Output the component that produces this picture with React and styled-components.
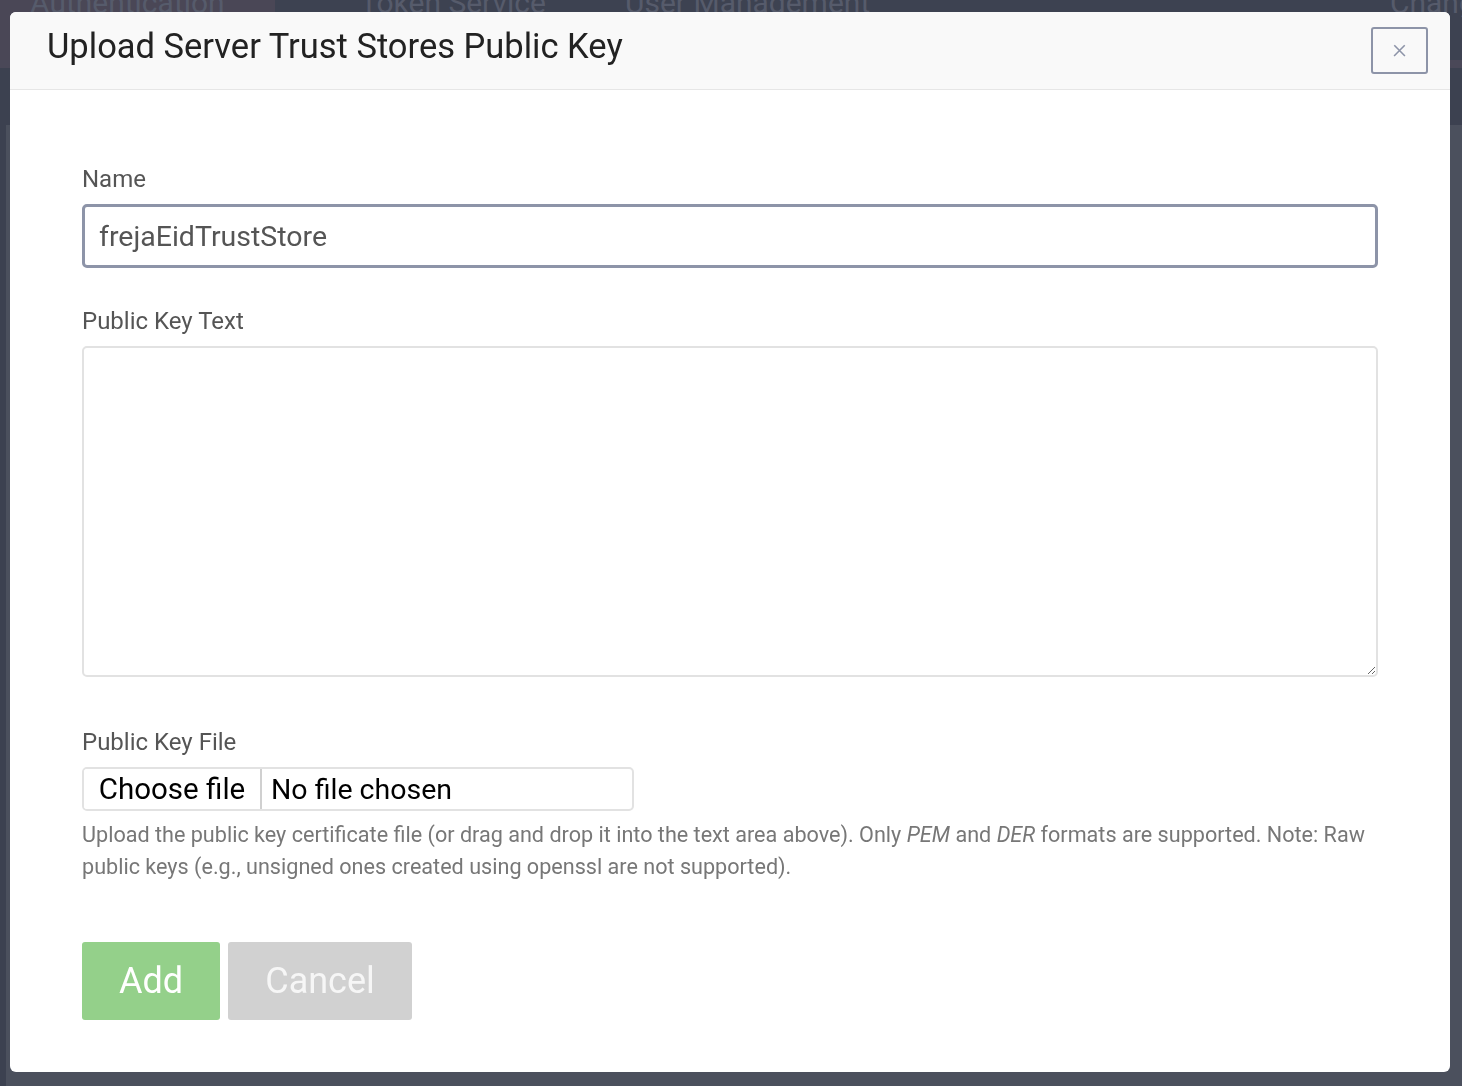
import React from "react";
import styled, { createGlobalStyle } from "styled-components";

const GlobalStyle = createGlobalStyle`
  * { box-sizing: border-box; }
  html, body { margin: 0; padding: 0; }
  body {
    font-family: Roboto, "Liberation Sans", Arial, sans-serif;
    background: #4b505d;
    overflow: hidden;
  }
`;

const Page = styled.div`
  width: 100%;
  height: 1086px;
  display: flex;
  flex-direction: column;
  background: #4b505d;
`;

const NavBar = styled.div`
  display: flex;
  height: 60px;
  background: #3d4251;
  overflow: hidden;
`;

const NavTab = styled.div`
  width: ${({ w }) => w}px;
  padding-left: ${({ pad }) => pad}px;
  background: ${({ active }) => (active ? "#4a4756" : "transparent")};
  color: #565b6b;
  font-size: 30px;
  line-height: 30px;
  margin-top: -12px;
  height: 72px;
  white-space: nowrap;
`;

const NavStrip = styled.div`
  height: 8px;
  background: #4a4858;
`;

const SubBar = styled.div`
  height: 57px;
  background: #3c4150;
`;

const Content = styled.div`
  flex: 1;
  display: flex;
`;

const SideRail = styled.div`
  width: 6px;
  background: #3c4150;
`;

const Overlay = styled.div`
  position: fixed;
  inset: 0;
  padding: 12px 12px 14px 10px;
  display: flex;
  align-items: flex-start;
`;

const Modal = styled.div`
  width: 1440px;
  background: #fff;
  border-radius: 6px;
  overflow: hidden;
  display: flex;
  flex-direction: column;
`;

const Header = styled.div`
  height: 78px;
  background: #f9f9f9;
  border-bottom: 1px solid #e6e6e6;
  display: flex;
  align-items: center;
  justify-content: space-between;
  padding: 0 22px 0 37px;
`;

const Title = styled.h2`
  margin: -9px 0 0;
  font-size: 34.5px;
  font-weight: 400;
  color: #222;
`;

const CloseButton = styled.button`
  width: 57px;
  height: 47px;
  border: 2px solid #8d94a8;
  border-radius: 3px;
  background: transparent;
  color: #8d94a8;
  font-family: inherit;
  font-size: 28px;
  font-weight: 300;
  line-height: 1;
  padding: 0 0 4px;
  cursor: pointer;
`;

const Body = styled.div`
  padding: 73px 72px 52px;
  display: flex;
  flex-direction: column;
`;

const Group = styled.div`
  display: flex;
  flex-direction: column;
  margin-bottom: ${({ gap }) => gap || 0}px;
`;

const Label = styled.label`
  font-size: 24px;
  line-height: 32px;
  color: #555;
  margin-bottom: 9px;
`;

const TextInput = styled.input`
  height: 64px;
  border: 3px solid #8d94a8;
  border-radius: 5px;
  padding: 0 14px;
  font-family: inherit;
  font-size: 28.5px;
  color: #555;
  outline: none;
`;

const TextArea = styled.textarea`
  display: block;
  height: 331px;
  border: 2px solid #e2e2e2;
  border-radius: 5px;
  padding: 12px 14px;
  font-family: inherit;
  font-size: 22px;
  color: #555;
  outline: none;
`;

const FileRow = styled.div`
  width: 552px;
  height: 44px;
  display: flex;
  align-items: stretch;
  border: 2px solid #e2e2e2;
  border-radius: 5px;
  overflow: hidden;
`;

const FileButton = styled.div`
  width: 178px;
  display: flex;
  align-items: center;
  justify-content: center;
  background: #fff;
  border-right: 2px solid #d0d0d0;
  font-size: 29.5px;
  color: #000;
`;

const FileStatus = styled.div`
  display: flex;
  align-items: center;
  padding-left: 9px;
  font-size: 28.5px;
  color: #000;
`;

const Help = styled.p`
  margin: 8px 0 59px;
  font-size: 21.6px;
  line-height: 32px;
  color: #777;

  em { font-style: italic; }
`;

const Actions = styled.div`
  display: flex;
  gap: 8px;
`;

const ActionButton = styled.button`
  height: 78px;
  width: ${({ w }) => w}px;
  border: none;
  border-radius: 3px;
  background: ${({ variant }) => (variant === "primary" ? "#94d08a" : "#d1d1d1")};
  color: ${({ variant }) => (variant === "primary" ? "#fff" : "#f6f6f6")};
  font-family: inherit;
  font-size: 36px;
  font-weight: 400;
  padding: 0;
  cursor: pointer;
`;

export default function App() {
  return (
    <>
      <GlobalStyle />
      <Page>
        <NavBar>
          <NavTab active w={275} pad={30}>Authentication</NavTab>
          <NavTab w={333} pad={85}>Token Service</NavTab>
          <NavTab w={760} pad={17}>User Management</NavTab>
          <NavTab w={94} pad={22}>Change</NavTab>
        </NavBar>
        <NavStrip />
        <SubBar />
        <Content>
          <SideRail />
        </Content>
      </Page>
      <Overlay>
        <Modal>
          <Header>
            <Title>Upload Server Trust Stores Public Key</Title>
            <CloseButton aria-label="Close">×</CloseButton>
          </Header>
          <Body>
            <Group gap={37}>
              <Label>Name</Label>
              <TextInput defaultValue="frejaEidTrustStore" />
            </Group>
            <Group gap={49}>
              <Label>Public Key Text</Label>
              <TextArea />
            </Group>
            <Group>
              <Label>Public Key File</Label>
              <FileRow>
                <FileButton>Choose file</FileButton>
                <FileStatus>No file chosen</FileStatus>
              </FileRow>
            </Group>
            <Help>
              Upload the public key certificate file (or drag and drop it into the text area above). Only <em>PEM</em> and <em>DER</em> formats are supported. Note: Raw public keys (e.g., unsigned ones created using openssl are not supported).
            </Help>
            <Actions>
              <ActionButton variant="primary" w={138}>Add</ActionButton>
              <ActionButton w={184}>Cancel</ActionButton>
            </Actions>
          </Body>
        </Modal>
      </Overlay>
    </>
  );
}
